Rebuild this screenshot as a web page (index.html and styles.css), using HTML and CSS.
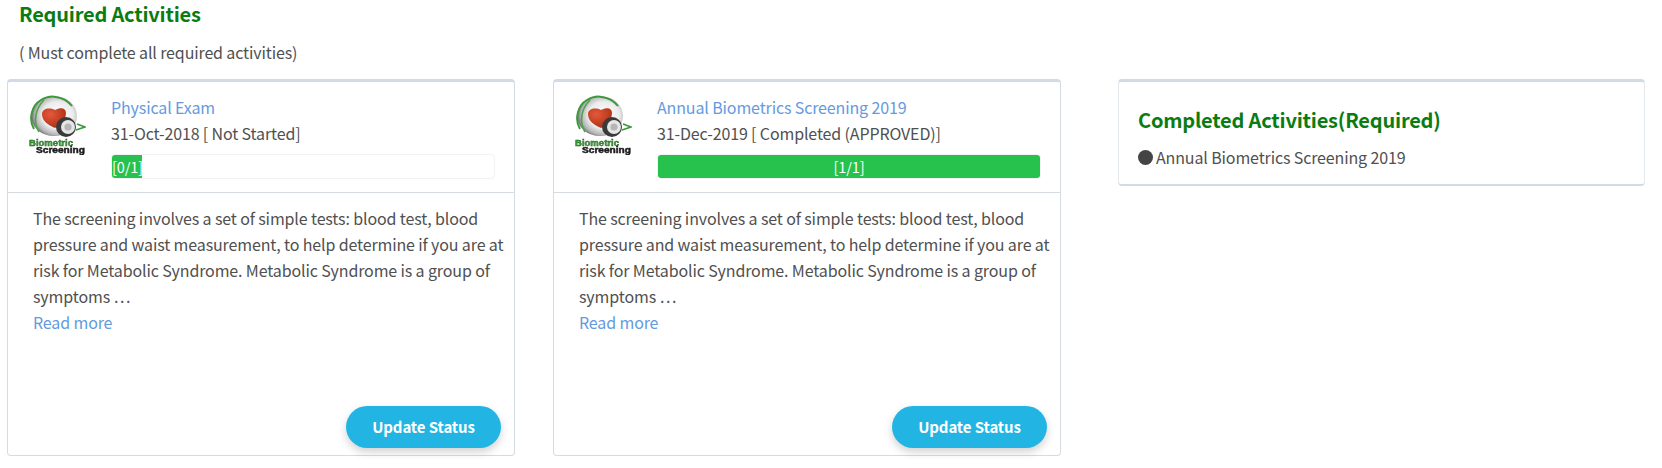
FILE: index.html
```html
<!DOCTYPE html>
<html lang="en">
<head>
<meta charset="utf-8">
<title>Required Activities</title>
<link rel="stylesheet" href="styles.css">
</head>
<body>
<svg class="defs" width="0" height="0" aria-hidden="true">
  <defs>
    <radialGradient id="heart" cx="0.35" cy="0.3" r="0.85">
      <stop offset="0" stop-color="#e4593a"/>
      <stop offset="1" stop-color="#a42a10"/>
    </radialGradient>
    <radialGradient id="globe" cx="0.58" cy="0.48" r="0.56">
      <stop offset="0" stop-color="#ffffff"/>
      <stop offset="0.6" stop-color="#ececec"/>
      <stop offset="0.88" stop-color="#b4b4b4"/>
      <stop offset="1" stop-color="#7c7c7c"/>
    </radialGradient>
    <symbol id="logo" viewBox="0 0 58 60">
      <ellipse cx="26" cy="21" rx="23" ry="20" fill="url(#globe)"/>
      <path d="M6 34C0 24 4 10 13 5c5-3 11-4 15-3 7 1 12 4 16 9" fill="none" stroke="#3c9a3c" stroke-width="2"/>
      <path d="M11 37C5 27 7 14 16 5" fill="none" stroke="#4fa34f" stroke-width="1.6"/>
      <path d="M27 33C20 30 14 26 14 19c0-5 7-7 13-4 6-3 11-2 11 3 0 7-6 12-11 15z" fill="url(#heart)"/>
      <circle cx="38" cy="32" r="10" fill="#3a3a3a"/>
      <circle cx="40" cy="32" r="7" fill="#e6e6e6"/>
      <circle cx="40" cy="32" r="3.6" fill="#b6b6b6"/>
      <path d="M48 35l9-3-8-3" fill="none" stroke="#3c9a3c" stroke-width="1.8"/>
      <text x="1" y="51" textLength="44" lengthAdjust="spacingAndGlyphs" class="logo-top">Biometric</text>
      <text x="8" y="58" textLength="49" lengthAdjust="spacingAndGlyphs" class="logo-bottom">Screening</text>
    </symbol>
  </defs>
</svg>
<main class="page">
  <section class="required">
    <h2 class="heading">Required Activities</h2>
    <p class="note">( Must complete all required activities)</p>
    <div class="cards">
      <article class="card">
        <header class="card-head">
          <svg class="logo"><use href="#logo"/></svg>
          <div class="card-info">
            <a class="link title" href="#">Physical Exam</a>
            <div class="date">31-Oct-2018 [ Not Started]</div>
            <div class="progress"><div class="bar bar-zero">[0/1]</div></div>
          </div>
        </header>
        <div class="card-body">
          <p class="desc">The screening involves a set of simple tests: blood test, blood pressure and waist measurement, to help determine if you are at risk for Metabolic Syndrome. Metabolic Syndrome is a group of symptoms …</p>
          <a class="link" href="#">Read more</a>
        </div>
        <footer class="card-foot"><button class="btn" type="button">Update Status</button></footer>
      </article>
      <article class="card">
        <header class="card-head">
          <svg class="logo"><use href="#logo"/></svg>
          <div class="card-info">
            <a class="link title" href="#">Annual Biometrics Screening 2019</a>
            <div class="date">31-Dec-2019 [ Completed (APPROVED)]</div>
            <div class="progress"><div class="bar bar-full">[1/1]</div></div>
          </div>
        </header>
        <div class="card-body">
          <p class="desc">The screening involves a set of simple tests: blood test, blood pressure and waist measurement, to help determine if you are at risk for Metabolic Syndrome. Metabolic Syndrome is a group of symptoms …</p>
          <a class="link" href="#">Read more</a>
        </div>
        <footer class="card-foot"><button class="btn" type="button">Update Status</button></footer>
      </article>
    </div>
  </section>
  <aside class="completed">
    <h2 class="heading">Completed Activities(Required)</h2>
    <div class="done-item"><span class="dot"></span>Annual Biometrics Screening 2019</div>
  </aside>
</main>
</body>
</html>
```
FILE: styles.css
```css
* { box-sizing: border-box; }
html, body { margin: 0; padding: 0; background: #fff; }
body {
  font-family: "Noto Sans CJK SC", "Source Sans Pro", "Noto Sans", sans-serif;
  font-size: 16px;
  line-height: 26px;
  letter-spacing: -0.13px;
  color: #505050;
  height: 468px;
  overflow: hidden;
}
.defs { position: absolute; }
.page { display: flex; align-items: flex-start; padding-left: 7px; }
.required { width: 1076px; flex: none; }
.heading { margin: 0; font-size: 20px; font-weight: 700; line-height: 28px; letter-spacing: -0.2px; color: #0a7c12; }
.required > .heading { padding-left: 12px; }
.note { margin: 11px 0 0; padding-left: 12px; line-height: 26px; }
.cards { display: flex; gap: 38px; margin-top: 14px; }
.card {
  width: 508px;
  height: 377px;
  display: flex;
  flex-direction: column;
  background: #fff;
  border: 1px solid #d5dbe0;
  border-top: 3px solid #d0dbe5;
  border-radius: 4px;
}
.card-head { display: flex; height: 111px; padding: 12px 20px 0 20px; border-bottom: 1px solid #d5dbe0; flex: none; }
.logo { width: 58px; height: 60px; flex: none; margin-top: 1px; filter: blur(0.4px); }
.card-info { margin-left: 25px; flex: 1; display: flex; flex-direction: column; align-items: flex-start; }
.link { color: #659ade; text-decoration: none; }
.progress { width: 384px; height: 25px; margin-top: 8px; border: 1px solid #f2f2f2; border-radius: 4px; background: #fff; overflow: hidden; }
.bar { height: 100%; background: #26c24d; color: #fff; font-size: 14.5px; line-height: 23px; text-align: center; white-space: nowrap; }
.bar-zero { width: 30px; }
.bar-full { width: 100%; }
.card-body { padding: 12px 8px 0 25px; flex: 1; }
.desc { margin: 0; }
.card-foot { display: flex; justify-content: flex-end; padding: 0 13px 7px 0; }
.btn {
  width: 155px;
  height: 42px;
  border: 0;
  border-radius: 21px;
  background: #22b5e3;
  color: #fff;
  font: 700 15px/20px "Noto Sans CJK SC", sans-serif;
  letter-spacing: -0.1px;
  box-shadow: 0 4px 8px rgba(0, 0, 0, 0.18);
}
.completed {
  width: 527px;
  height: 107px;
  margin-top: 79px;
  margin-left: 35px;
  padding: 23px 19px 0;
  border: 1px solid #e4e9ee;
  border-top: 3px solid #d0dbe5;
  border-bottom: 2px solid #d0dbe5;
  border-radius: 4px;
}
.completed .heading { line-height: 30px; }
.done-item { display: flex; align-items: center; margin-top: 9px; }
.dot { width: 15px; height: 15px; border-radius: 50%; background: #444; margin-right: 3px; }
.logo-top { font: 700 9.5px "Liberation Sans", sans-serif; letter-spacing: 0; fill: #3fa53a; stroke: #1f5f1c; stroke-width: 0.45px; }
.logo-bottom { font: 700 9.5px "Liberation Sans", sans-serif; letter-spacing: 0; fill: #1c1c1c; stroke: #1c1c1c; stroke-width: 0.5px; }
```
